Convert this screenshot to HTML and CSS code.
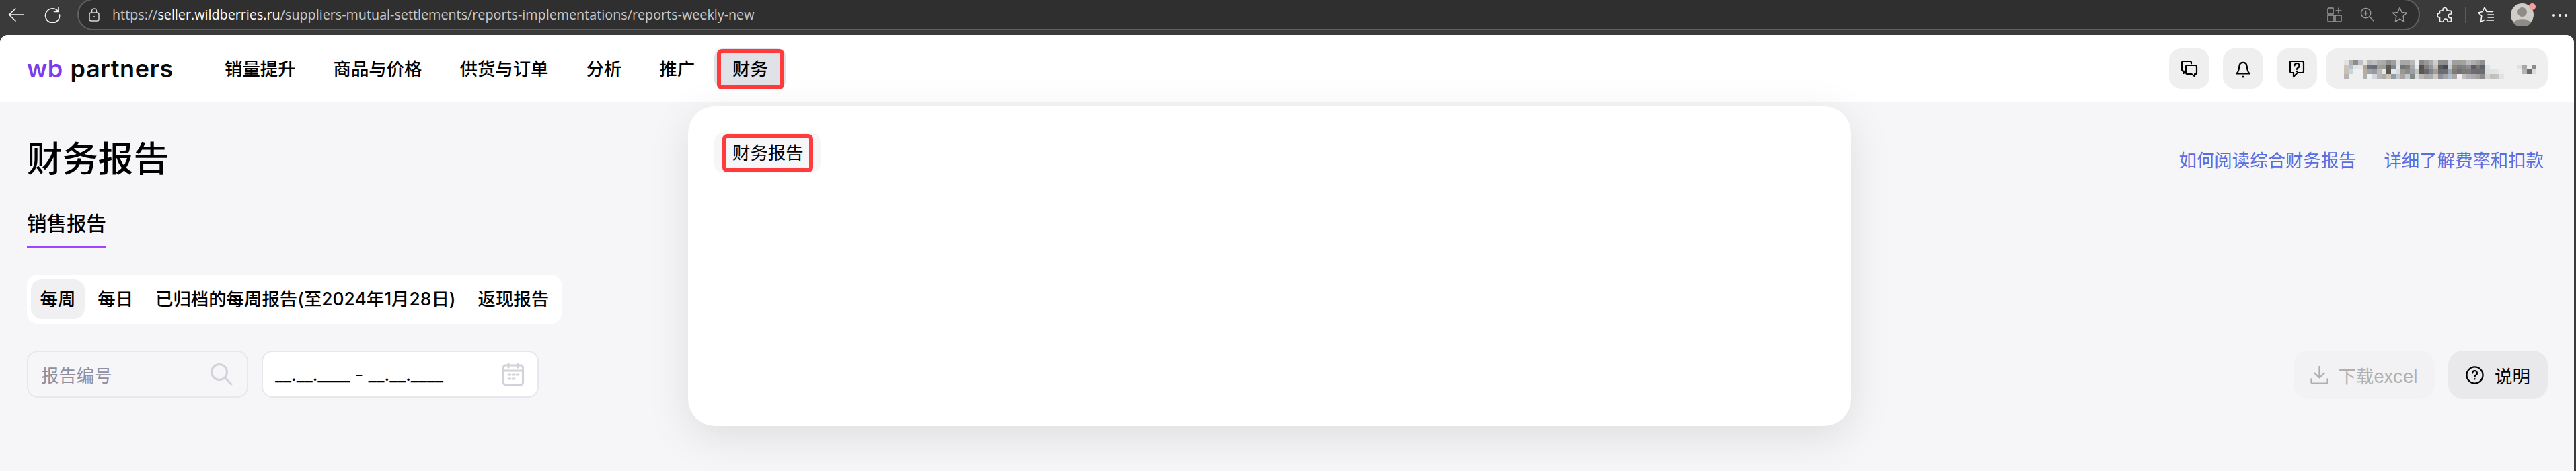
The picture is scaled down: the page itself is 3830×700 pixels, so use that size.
FILE: index.html
```html
<!DOCTYPE html>
<html lang="zh-CN">
  <head>
    <meta charset="UTF-8" />
    <title>财务报告</title>
    <link rel="stylesheet" href="styles.css">
  </head>
  <body>
    <div class="browser">
      <svg class="b-icon back" viewBox="0 0 24 20"><path d="M11 1 1.500 10 11 19M2 10h22"/></svg>
      <svg class="b-icon reload" viewBox="0 0 24 24"><path d="M20.500 7A10.500 10.500 0 1 0 22.500 12M21 1v6.500h-6.500"/></svg>
      <div class="address">
        <svg class="lock" viewBox="0 0 16 20"><rect x="1" y="7" width="14" height="12" rx="2.500"/><path d="M4.500 7V4.500a3.500 3.500 0 0 1 7 0V7"/><circle cx="8" cy="13" r="1" class="dot"/></svg>
        <div class="url">https://<span class="host">seller.wildberries.ru</span>/suppliers-mutual-settlements/reports-implementations/reports-weekly-new</div>
        <svg class="a-icon apps" viewBox="0 0 22 22"><path d="M1 2.500A1.500 1.500 0 0 1 2.500 1H9v9H1zM1 12h9v9H2.500A1.500 1.500 0 0 1 1 19.500zM12 12h9v7.500a1.500 1.500 0 0 1-1.500 1.500H12zM17 1v8M13 5h8"/></svg>
        <svg class="a-icon zoom" viewBox="0 0 22 22"><circle cx="9" cy="9" r="7.500"/><path d="M14.500 14.500 21 21M9 5.500v7M5.500 9h7"/></svg>
        <svg class="a-icon star" viewBox="0 0 24 24"><path d="m12 1.500 3.200 7 7.300.8-5.400 5 1.500 7.700-6.600-3.900L5.400 22l1.500-7.700-5.400-5 7.300-.8z"/></svg>
      </div>
      <svg class="b-icon puzzle" viewBox="0 0 22 24"><path d="M8 4.500a3 3 0 0 1 6 0V6h5a1.500 1.500 0 0 1 1.500 1.500V11H19a2.800 2.800 0 0 0 0 5.600h1.500v4A1.500 1.500 0 0 1 19 22h-4v-1a3 3 0 0 0-6 0v1H5a1.500 1.500 0 0 1-1.500-1.500V16H3a3 3 0 0 1 0-6h.5V7.500A1.500 1.500 0 0 1 5 6h3z"/></svg>
      <div class="divider"></div>
      <svg class="b-icon favs" viewBox="0 0 24 24"><path d="M10 1 13 7.500h9.500M10 1 7 7.500.8 9l5 5-1.500 8.500 5.500-3M15 12h8.500M15 16h8.500M13 20h10.500"/></svg>
      <div class="avatar">
        <svg viewBox="0 0 34 34"><circle cx="17" cy="17" r="17" fill="#cfcdc8"/><circle cx="17" cy="13" r="7" fill="#8f8c88"/><path d="M4 29a14 9 0 0 1 26 0 17 17 0 0 1-26 0z" fill="#8f8c88"/></svg>
        <span class="avatar-dot"></span>
      </div>
      <div class="more"><span></span><span></span><span></span></div>
    </div>

    <div class="page">
      <header class="topbar">
        <div class="logo"><span class="logo-wb">wb</span> partners</div>
        <nav class="nav">
          <a class="nav-item">销量提升</a>
          <a class="nav-item">商品与价格</a>
          <a class="nav-item">供货与订单</a>
          <a class="nav-item">分析</a>
          <a class="nav-item">推广</a>
          <a class="nav-item active">财务<span class="mark mark-nav"></span></a>
        </nav>
        <div class="top-actions">
          <button class="round-btn">
            <svg viewBox="0 0 28 28"><path d="M17 6.500V5a2 2 0 0 0-2-2H5a2 2 0 0 0-2 2v10.500a2 2 0 0 0 2 2h.5V21l3-3"/><path d="M11 9h12a2 2 0 0 1 2 2v9a2 2 0 0 1-2 2h-1v3.500L17.500 22H11a2 2 0 0 1-2-2v-9a2 2 0 0 1 2-2z"/></svg>
          </button>
          <button class="round-btn">
            <svg viewBox="0 0 28 28"><path d="M4 21.500c1.500-1 2.800-3 3.500-6l1-6a5.600 5.600 0 0 1 11 0l1 6c.7 3 2 5 3.500 6z"/><circle cx="14" cy="26" r="1.500" class="solid"/></svg>
          </button>
          <button class="round-btn">
            <svg viewBox="0 0 28 28"><path d="M5 3h18a2 2 0 0 1 2 2v13a2 2 0 0 1-2 2h-7l-6 6v-6H7a2 2 0 0 1-2-2z" transform="translate(-1 0)"/><path d="M10.500 9.500a3.500 3.500 0 1 1 5 3.200c-1 .5-1.500 1-1.500 2.300"/><circle cx="14" cy="18" r="1.300" class="solid"/></svg>
          </button>
          <div class="account">
            <svg class="blur-name" viewBox="0 0 34 4">
              <rect x="0" y="0" fill="#e4e2e0"/><rect x="1" y="0" fill="#aeb0b2"/><rect x="2" y="0" fill="#8c8c8c"/><rect x="3" y="0" fill="#bcc0c6"/><rect x="4" y="0" fill="#ece4dc"/><rect x="5" y="0" fill="#b4b8bc"/><rect x="6" y="0" fill="#bcbec4"/><rect x="7" y="0" fill="#b0aeac"/><rect x="8" y="0" fill="#acaaa8"/><rect x="9" y="0" fill="#8e9090"/><rect x="10" y="0" fill="#9ea0a0"/><rect x="11" y="0" fill="#dce0e4"/><rect x="12" y="0" fill="#a8a8a8"/><rect x="13" y="0" fill="#a8a8a8"/><rect x="14" y="0" fill="#b8b8b8"/><rect x="15" y="0" fill="#f0f0f2"/><rect x="16" y="0" fill="#8a8884"/><rect x="17" y="0" fill="#989898"/><rect x="18" y="0" fill="#a8acb0"/><rect x="19" y="0" fill="#d4ccc6"/><rect x="20" y="0" fill="#8c8e92"/><rect x="21" y="0" fill="#8c8c90"/><rect x="22" y="0" fill="#d0d6dc"/><rect x="23" y="0" fill="#a29e9a"/><rect x="24" y="0" fill="#a29e9a"/><rect x="25" y="0" fill="#a4a29e"/><rect x="26" y="0" fill="#b8bcc4"/><rect x="27" y="0" fill="#b0acb0"/><rect x="28" y="0" fill="#a4a09e"/><rect x="29" y="0" fill="#8e9094"/><rect x="30" y="0" fill="#eceef0"/>
              <rect x="0" y="1" fill="#cfc4ba"/><rect x="1" y="1" fill="#b0c0cc"/><rect x="2" y="1" fill="#e2e2e2"/><rect x="3" y="1" fill="#e4e4e4"/><rect x="4" y="1" fill="#b0a498"/><rect x="5" y="1" fill="#6a7478"/><rect x="6" y="1" fill="#6c6c78"/><rect x="7" y="1" fill="#a09e98"/><rect x="8" y="1" fill="#9c9c96"/><rect x="9" y="1" fill="#5c5a54"/><rect x="10" y="1" fill="#84878a"/><rect x="11" y="1" fill="#e4e6e8"/><rect x="12" y="1" fill="#6e7478"/><rect x="13" y="1" fill="#7e7c78"/><rect x="14" y="1" fill="#a8a8a8"/><rect x="15" y="1" fill="#e4e8ec"/><rect x="16" y="1" fill="#56524c"/><rect x="17" y="1" fill="#808080"/><rect x="18" y="1" fill="#9098a0"/><rect x="19" y="1" fill="#c8bcb0"/><rect x="20" y="1" fill="#585c60"/><rect x="21" y="1" fill="#484c52"/><rect x="22" y="1" fill="#c4ccd4"/><rect x="23" y="1" fill="#8a8680"/><rect x="24" y="1" fill="#7c7e7e"/><rect x="25" y="1" fill="#7e8284"/><rect x="26" y="1" fill="#8e8c8c"/><rect x="27" y="1" fill="#5c5e64"/><rect x="28" y="1" fill="#7a7676"/><rect x="29" y="1" fill="#5e646a"/><rect x="30" y="1" fill="#e0e4e8"/>
              <rect x="0" y="2" fill="#ccbfb4"/><rect x="1" y="2" fill="#c8d4dc"/><rect x="4" y="2" fill="#b8aca0"/><rect x="5" y="2" fill="#9ca4a8"/><rect x="6" y="2" fill="#9a96a4"/><rect x="7" y="2" fill="#b8b8b4"/><rect x="8" y="2" fill="#e8e6e0"/><rect x="9" y="2" fill="#5a564e"/><rect x="10" y="2" fill="#dfe8f2"/><rect x="11" y="2" fill="#d8dadc"/><rect x="12" y="2" fill="#9a9694"/><rect x="13" y="2" fill="#8e8a84"/><rect x="14" y="2" fill="#9aa0a8"/><rect x="15" y="2" fill="#c4c4c0"/><rect x="16" y="2" fill="#5c5850"/><rect x="17" y="2" fill="#68686a"/><rect x="18" y="2" fill="#7e868c"/><rect x="19" y="2" fill="#a89c90"/><rect x="20" y="2" fill="#686c70"/><rect x="21" y="2" fill="#6a6e74"/><rect x="22" y="2" fill="#9aa8b4"/><rect x="23" y="2" fill="#807a74"/><rect x="24" y="2" fill="#70706e"/><rect x="25" y="2" fill="#7a7a78"/><rect x="26" y="2" fill="#7e7a76"/><rect x="27" y="2" fill="#6e6e70"/><rect x="28" y="2" fill="#6c6a6c"/><rect x="29" y="2" fill="#6a6c70"/><rect x="30" y="2" fill="#d8e0e4"/><rect x="31" y="2" fill="#e2e2e2"/><rect x="32" y="2" fill="#e4e4e4"/><rect x="33" y="2" fill="#ecedf0"/>
              <rect x="0" y="3" fill="#b4b4b4"/><rect x="4" y="3" fill="#b0b0b0"/><rect x="6" y="3" fill="#d4d6dc"/><rect x="7" y="3" fill="#b8b6b4"/><rect x="8" y="3" fill="#acacac"/><rect x="9" y="3" fill="#c8c2bc"/><rect x="10" y="3" fill="#949ca0"/><rect x="11" y="3" fill="#c0c4cc"/><rect x="12" y="3" fill="#a8a4a0"/><rect x="13" y="3" fill="#c0c8d0"/><rect x="14" y="3" fill="#888884"/><rect x="15" y="3" fill="#d8dce0"/><rect x="16" y="3" fill="#b8b8b8"/><rect x="17" y="3" fill="#a8a8a8"/><rect x="18" y="3" fill="#a8acb0"/><rect x="19" y="3" fill="#d0c8c0"/><rect x="20" y="3" fill="#8e9098"/><rect x="21" y="3" fill="#a8a4a4"/><rect x="22" y="3" fill="#b0bcc8"/><rect x="23" y="3" fill="#a8a8a8"/><rect x="25" y="3" fill="#c4beb8"/><rect x="26" y="3" fill="#b0b0b4"/><rect x="27" y="3" fill="#aaaab0"/><rect x="28" y="3" fill="#a4a0a0"/><rect x="29" y="3" fill="#8c8c8e"/><rect x="30" y="3" fill="#d4d4d0"/><rect x="31" y="3" fill="#c0c0c0"/><rect x="32" y="3" fill="#c4c4c4"/><rect x="33" y="3" fill="#dfe2e6"/>
            </svg>
            <svg class="blur-chevron" viewBox="0 0 4 3">
              <rect x="0" y="0" fill="#e0e0e0"/><rect x="1" y="0" fill="#a8a8a8"/><rect x="3" y="0" fill="#8c8c8c"/>
              <rect x="1" y="1" fill="#b4b4b4"/><rect x="2" y="1" fill="#6a6a6a"/><rect x="3" y="1" fill="#dcdcdc"/>
            </svg>
          </div>
        </div>
      </header>

      <main class="content">
        <div class="title-row">
          <h1 class="title">财务报告</h1>
          <div class="links">
            <a class="link">如何阅读综合财务报告</a>
            <a class="link">详细了解费率和扣款</a>
          </div>
        </div>

        <div class="tabs">
          <a class="tab">销售报告</a>
        </div>

        <div class="segment">
          <a class="segment-item active">每周</a>
          <a class="segment-item">每日</a>
          <a class="segment-item">已归档的每周报告(至2024年1月28日)</a>
          <a class="segment-item">返现报告</a>
        </div>

        <div class="toolbar">
          <div class="filters">
            <div class="field search-field">
              <span class="placeholder">报告编号</span>
              <svg class="field-icon" viewBox="0 0 34 34"><circle cx="14" cy="14" r="11.500"/><path d="m22.500 22.500 9.500 9.500"/></svg>
            </div>
            <div class="field date-field">
              <span class="date-mask">__.__.____ - __.__.____</span>
              <svg class="field-icon" viewBox="0 0 32 34"><rect x="1.500" y="4" width="29" height="28.500" rx="3"/><path d="M1.500 12h29M9 1v6M23 1v6M9 18h3M15 18h3M21 18h3M9 24h3M15 24h3"/></svg>
            </div>
          </div>
          <div class="actions">
            <button class="btn btn-disabled">
              <svg viewBox="0 0 28 28"><path d="M14 1v17M6.500 11 14 18l7.500-7M1.500 20v5a1.500 1.500 0 0 0 1.500 1.500h22a1.500 1.500 0 0 0 1.500-1.500v-5"/></svg>
              下载excel
            </button>
            <button class="btn btn-help">
              <svg viewBox="0 0 28 28"><circle cx="14" cy="14" r="12.500"/><path d="M10.500 11a3.500 3.500 0 1 1 5.200 3c-1.200.7-1.700 1.200-1.700 2.500"/><circle cx="14" cy="20" r="1.300" class="solid"/></svg>
              说明
            </button>
          </div>
        </div>
      </main>

      <div class="menu-panel">
        <a class="menu-item">财务报告<span class="mark mark-menu"></span></a>
      </div>
    </div>
  </body>
</html>
```

FILE: styles.css
```css
* {
  box-sizing: border-box;
}

html, body {
  height: 100%;
}

body {
  margin: 0;
  overflow: hidden;
  background: #3a3a3a;
  font-family: Inter, 'Noto Sans CJK SC', sans-serif;
  font-size: 26.4px;
  color: #000;
}

a {
  color: inherit;
  text-decoration: none;
}

button {
  font: inherit;
  border: none;
  padding: 0;
}

/* browser chrome */
.browser {
  display: flex;
  align-items: flex-start;
  height: 52px;
  padding-left: 12px;
  overflow: hidden;
}
.browser svg {
  fill: none;
  stroke-linecap: round;
  stroke-linejoin: round;
}
.b-icon {
  flex: none;
  stroke: #f4f4f4;
  stroke-width: 1.6;
}
.back {
  width: 24px;
  height: 20px;
  margin-top: 12px;
}
.reload {
  width: 24px;
  height: 24px;
  margin: 10px 0 0 30px;
}
.address {
  flex: none;
  display: flex;
  align-items: center;
  width: 3483px;
  height: 47px;
  margin: -2px 0 0 25px;
  padding: 0 16px 0 15px;
  background: #2f2f2f;
  border: 2px solid #626262;
  border-radius: 24px;
}
.lock {
  flex: none;
  width: 16px;
  height: 20px;
  stroke: #d8d8d8;
  stroke-width: 1.5;
}
.lock .dot {
  fill: #d8d8d8;
  stroke: none;
}
.url {
  flex: 1;
  margin-left: 19px;
  font-family: 'Open Sans', sans-serif;
  font-size: 19.75px;
  color: #c9c9c9;
  white-space: nowrap;
}
.host {
  color: #fff;
}
.a-icon {
  flex: none;
  stroke: #9b9b9b;
  stroke-width: 1.5;
}
.apps {
  width: 22px;
  height: 22px;
}
.zoom {
  width: 21px;
  height: 21px;
  margin-left: 27px;
}
.star {
  width: 24px;
  height: 24px;
  margin-left: 26px;
}
.puzzle {
  width: 22px;
  height: 24px;
  margin: 10px 0 0 26px;
}
.divider {
  flex: none;
  width: 2px;
  height: 24px;
  margin: 10px 0 0 19px;
  background: #5a5a5a;
}
.favs {
  width: 24px;
  height: 24px;
  margin: 10px 0 0 17px;
}
.avatar {
  flex: none;
  position: relative;
  width: 34px;
  height: 34px;
  margin: 5px 0 0 25px;
}
.avatar svg {
  display: block;
}
.avatar-dot {
  position: absolute;
  right: -3px;
  top: 0;
  width: 10px;
  height: 10px;
  border-radius: 50%;
  background: #f4a0a0;
}
.more {
  display: flex;
  gap: 5px;
  margin: 21px 0 0 28px;
}
.more span {
  width: 4px;
  height: 4px;
  border-radius: 50%;
  background: #f4f4f4;
}

/* page */
.page {
  position: relative;
  width: 3827px;
  height: 648px;
  overflow: hidden;
  background: #f6f6f9;
  border-radius: 12px 12px 0 0;
}

.topbar {
  display: flex;
  align-items: center;
  height: 99px;
  padding: 0 39px 0 40px;
  background: #fff;
}
.logo {
  width: 267px;
  font-size: 36px;
  font-weight: 600;
  letter-spacing: 0.6px;
  word-spacing: 1px;
  line-height: 1;
  white-space: nowrap;
  color: #0a0a0a;
}
.logo-wb {
  color: #7d3cec;
}
.nav {
  display: flex;
  gap: 2px;
}
.nav-item {
  position: relative;
  padding: 0 27px;
  font-weight: 500;
  line-height: 60px;
  border-radius: 14px;
}
.nav-item.active {
  background: #e1e2e8;
}

/* red boxes drawn over the screenshot */
.mark {
  position: absolute;
  border: 6px solid #ff3b3b;
  border-radius: 7px;
}
.mark-nav {
  left: 4px;
  top: 1px;
  width: 100px;
  height: 60px;
}
.mark-menu {
  left: 12px;
  top: 2px;
  width: 135px;
  height: 57px;
}

.top-actions {
  display: flex;
  margin-left: auto;
}
.round-btn {
  display: flex;
  align-items: center;
  justify-content: center;
  width: 60px;
  height: 60px;
  margin-right: 20px;
  background: #efefef;
  border-radius: 18px;
}
.round-btn:nth-child(3) {
  margin-right: 13px;
}
.round-btn svg {
  width: 28px;
  height: 28px;
  fill: none;
  stroke: #000;
  stroke-width: 2.2;
  stroke-linejoin: round;
  stroke-linecap: round;
}
.round-btn .solid, .btn .solid {
  fill: #000;
  stroke: none;
}
.account {
  display: flex;
  align-items: flex-start;
  width: 330px;
  height: 60px;
  padding: 17px 0 0 27px;
  background: #efefef;
  border-radius: 18px;
}
.blur-name rect, .blur-chevron rect {
  width: 1px;
  height: 1px;
}
.blur-name {
  width: 238px;
  height: 28px;
  filter: blur(0.7px);
  shape-rendering: crispEdges;
}
.blur-chevron {
  width: 28px;
  height: 21px;
  margin: 7px 0 0 20px;
  filter: blur(0.7px);
  shape-rendering: crispEdges;
}

.content {
  padding: 53px 39px 0 40px;
}
.title-row {
  display: flex;
  align-items: center;
  justify-content: space-between;
  padding-right: 6px;
}
.title {
  margin: 0;
  font-size: 52.8px;
  font-weight: 500;
  line-height: 64px;
}
.links {
  display: flex;
  gap: 41px;
  color: #5a6de0;
}

.tabs {
  display: flex;
  margin-top: 46px;
}
.tab {
  padding-bottom: 15px;
  border-bottom: 4px solid #a044ff;
  font-size: 29.5px;
  font-weight: 500;
  line-height: 36px;
}

.segment {
  display: inline-flex;
  gap: 6px;
  height: 73px;
  margin-top: 39px;
  padding: 7px 5px 7px 6px;
  background: #fff;
  border-radius: 16px;
  vertical-align: top;
}
.segment-item {
  padding: 0 13.5px;
  font-weight: 500;
  line-height: 59px;
  border-radius: 16px;
  white-space: nowrap;
}
.segment-item.active {
  background: #f0f0f2;
}

.toolbar {
  display: flex;
  justify-content: space-between;
  margin-top: 40px;
}
.filters {
  display: flex;
  gap: 20px;
}
.field {
  display: flex;
  align-items: center;
  justify-content: space-between;
  height: 70px;
  border: 2px solid #e7e7ec;
  border-radius: 16px;
}
.search-field {
  width: 329px;
  padding: 0 21px 0 19px;
}
.date-field {
  width: 412px;
  padding: 0 20px 0 18px;
  background: #fff;
}
.placeholder {
  color: #8f8f9d;
}
.date-mask {
  white-space: pre;
}
.field-icon {
  flex: none;
  height: 34px;
  fill: none;
  stroke: #d2d2da;
  stroke-width: 3;
  stroke-linecap: round;
  stroke-linejoin: round;
}
.search-field .field-icon {
  width: 34px;
}
.date-field .field-icon {
  width: 32px;
}

.actions {
  display: flex;
  gap: 20px;
}
.btn {
  display: flex;
  align-items: center;
  justify-content: center;
  gap: 14px;
  height: 72px;
  border-radius: 22px;
}
.btn svg {
  flex: none;
  width: 27px;
  height: 27px;
  fill: none;
  stroke: currentColor;
  stroke-width: 2.4;
  stroke-linecap: round;
  stroke-linejoin: round;
}
.btn-disabled {
  width: 210px;
  background: #f2f2f4;
  color: #b0b0b0;
}
.btn-help {
  gap: 16px;
  width: 148px;
  background: #e9e9eb;
  color: #000;
}

/* dropdown */
.menu-panel {
  position: absolute;
  left: 1023px;
  top: 106px;
  width: 1729px;
  height: 475px;
  padding: 39px;
  background: #fff;
  border-radius: 40px;
  box-shadow: 0 16px 64px rgba(0, 0, 0, 0.1);
}
.menu-item {
  display: inline-block;
  position: relative;
  width: 158px;
  padding-left: 27px;
  line-height: 60px;
  background: #f6f6f9;
  border-radius: 14px;
}
```
